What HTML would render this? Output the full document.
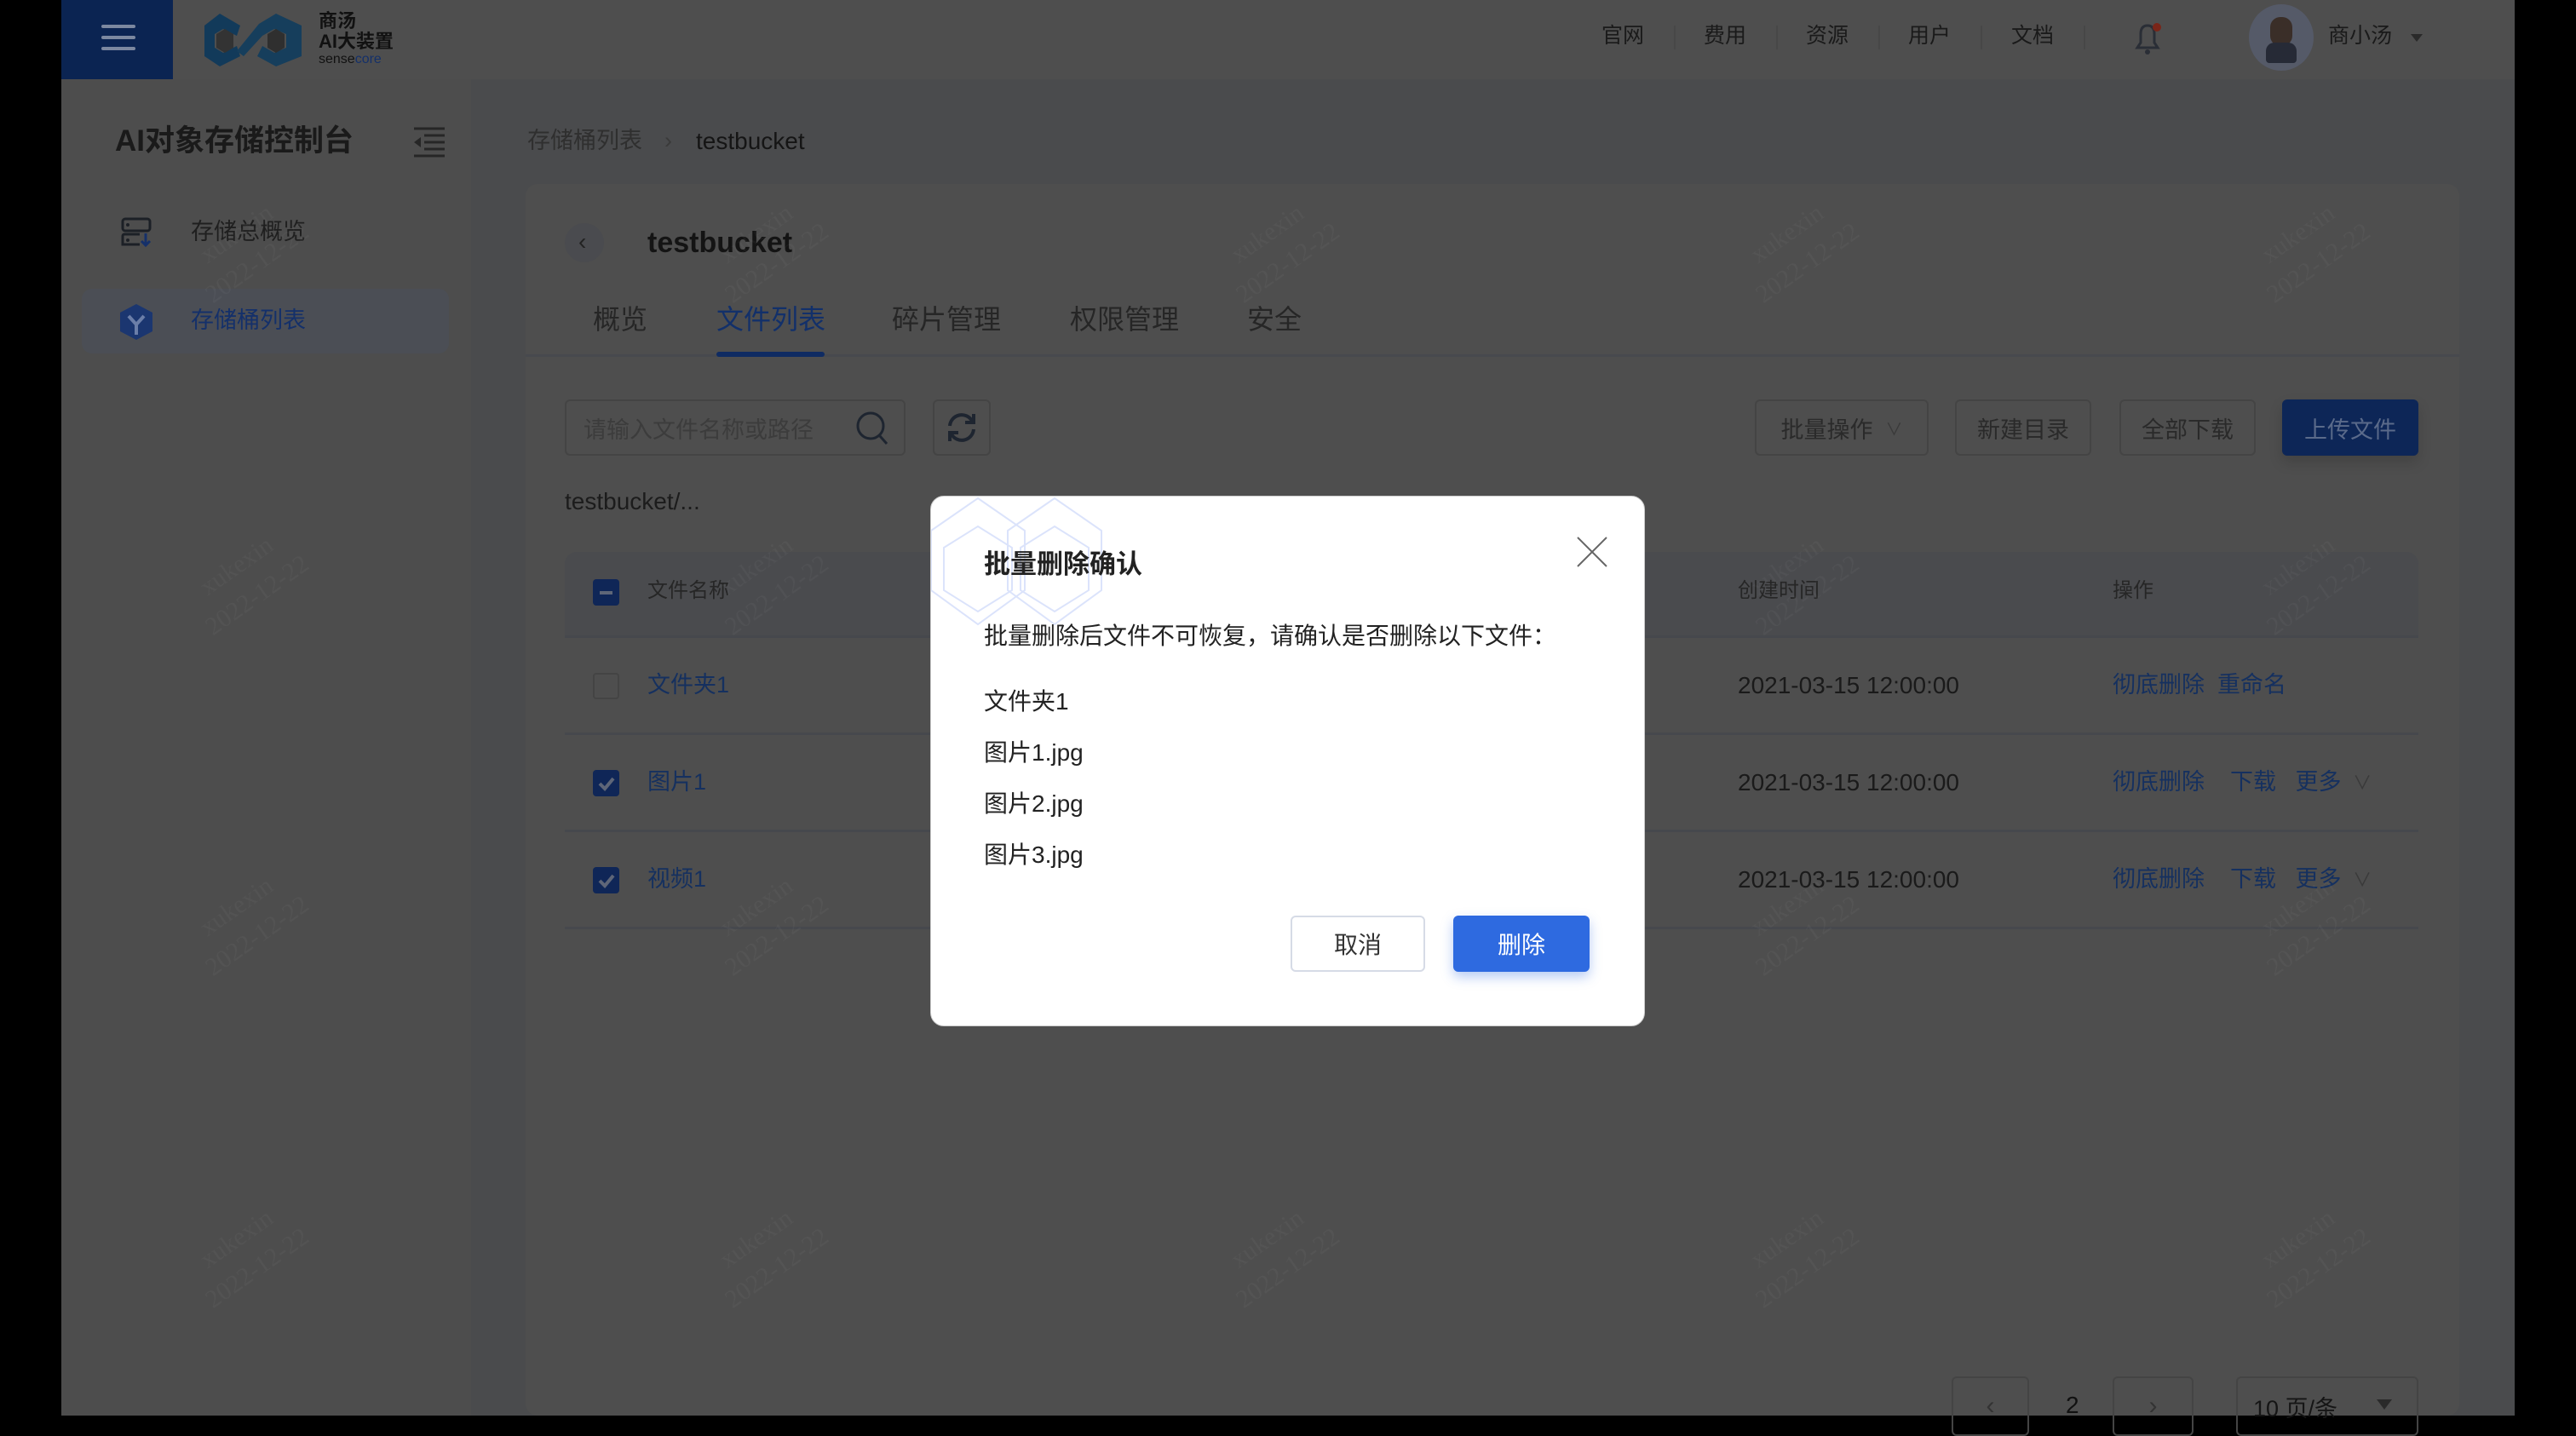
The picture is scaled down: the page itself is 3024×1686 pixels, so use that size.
<!DOCTYPE html>
<html><head><meta charset="utf-8"><style>
*{margin:0;padding:0;box-sizing:border-box}
body{width:3024px;height:1662px;overflow:hidden;background:#000;font-family:"Liberation Sans","Noto Sans CJK SC",sans-serif;position:relative;color:#1c1c1c}
.a{position:absolute}
.page{left:72px;top:0;width:2880px;height:1662px;background:#4a4b4d}
.hdr{left:72px;top:0;width:2880px;height:93px;background:#4e4e4e}
.side{left:72px;top:93px;width:481px;height:1569px;background:#4d4d4d}
.card{left:617px;top:216px;width:2270px;height:1446px;background:#4e4e4e;border-radius:14px}
.t{white-space:nowrap;line-height:1}
.nav{font-size:25px;color:#1a1a1a;top:30px}
.sep{width:2px;height:28px;background:#474747;top:30px}
.btn{border:2px solid #444;border-radius:6px;height:66px;font-size:27px;color:#2a2a2a;display:flex;align-items:center;justify-content:center}
.hl{height:3px;background:#46484d;left:663px;width:2176px}
.cb{width:31px;height:31px;border-radius:4px;background:#0f2657;left:696px}
.lnk{color:#15305f;font-size:27px}
.wm{color:rgba(255,255,255,0.035);font-family:"Liberation Serif",serif;font-size:30px;transform:rotate(-35deg);line-height:1.4;text-align:center;white-space:nowrap}
</style></head><body>
<div class="a page"></div>
<div class="a hdr"></div>
<div class="a" style="left:72px;top:0;width:131px;height:93px;background:#0b2452"></div>
<div class="a" style="left:119px;top:29px;width:40px;height:4px;background:#7c88a0;border-radius:2px"></div>
<div class="a" style="left:119px;top:42px;width:40px;height:4px;background:#7c88a0;border-radius:2px"></div>
<div class="a" style="left:119px;top:55px;width:40px;height:4px;background:#7c88a0;border-radius:2px"></div>
<svg class="a" style="left:238px;top:12px" width="120" height="70" viewBox="0 0 120 70"><path d="M20 4 L44 18 L40 30 L24 22 L14 28 L14 44 L24 50 L40 42 L44 54 L20 66 L2 54 L2 18 Z" fill="#123a5a"/><path d="M86 4 L116 18 L116 54 L86 66 L64 54 L70 42 L84 50 L98 44 L98 28 L84 22 L70 30 L48 54 L40 48 L66 16 Z" fill="#163e5c"/><path d="M16 28 L26 22 L36 28 L36 44 L26 50 L16 44Z" fill="#333"/><path d="M76 28 L86 22 L96 28 L96 44 L86 50 L76 44Z" fill="#2f2f2f"/></svg>
<div class="a t" style="left:374px;top:14px;font-size:22px;font-weight:bold;color:#111">商汤</div>
<div class="a t" style="left:374px;top:38px;font-size:22px;font-weight:bold;color:#111">AI大装置</div>
<div class="a t" style="left:374px;top:62px;font-size:16px;color:#111">sense<span style="color:#14306a">core</span></div>
<div class="a t nav" style="left:1880px">官网</div><div class="a sep" style="left:1965px"></div>
<div class="a t nav" style="left:2000px">费用</div><div class="a sep" style="left:2085px"></div>
<div class="a t nav" style="left:2120px">资源</div><div class="a sep" style="left:2205px"></div>
<div class="a t nav" style="left:2240px">用户</div><div class="a sep" style="left:2325px"></div>
<div class="a t nav" style="left:2361px">文档</div><div class="a sep" style="left:2446px"></div>
<svg class="a" style="left:2503px;top:22px" width="38" height="44" viewBox="0 0 38 44"><path d="M6 34 L10 28 L10 18 Q10 8 18 8 Q26 8 26 18 L26 28 L30 34 Z" fill="none" stroke="#2a2e36" stroke-width="3"/><circle cx="18" cy="39" r="3" fill="#2a2e36"/><circle cx="29" cy="10" r="5" fill="#7a2518"/></svg>
<div class="a" style="left:2640px;top:5px;width:76px;height:78px;border-radius:50%;background:#555a68"></div>
<div class="a" style="left:2665px;top:20px;width:26px;height:34px;border-radius:12px;background:#3a2e28"></div>
<div class="a" style="left:2660px;top:50px;width:36px;height:24px;border-radius:10px 10px 4px 4px;background:#262a36"></div>
<div class="a t nav" style="left:2733px">商小汤</div>
<div class="a" style="left:2830px;top:40px;border-left:7px solid transparent;border-right:7px solid transparent;border-top:9px solid #2a2a2a"></div>

<div class="a side"></div>
<div class="a t" style="left:135px;top:148px;font-size:35px;font-weight:bold;color:#1a1a1a">AI对象存储控制台</div>
<svg class="a" style="left:484px;top:149px" width="40" height="36" viewBox="0 0 40 36"><path d="M2 2H38M14 18H38M2 34H38M14 10H38M14 26H38" stroke="#262626" stroke-width="3"/><path d="M10 12 L2 18 L10 24Z" fill="#262626"/></svg>
<svg class="a" style="left:142px;top:255px" width="36" height="36" viewBox="0 0 36 36"><rect x="2" y="2" width="32" height="14" rx="3" fill="none" stroke="#1c2026" stroke-width="3"/><path d="M22 20H4a2 2 0 0 0-2 2v10h20" fill="none" stroke="#1c2026" stroke-width="3"/><circle cx="8" cy="9" r="2" fill="#1c2026"/><circle cx="8" cy="27" r="2" fill="#1c2026"/><path d="M29 19V33M24 28L29 33L34 28" fill="none" stroke="#15306a" stroke-width="3"/></svg>
<div class="a t" style="left:224px;top:259px;font-size:27px;color:#1f1f1f">存储总概览</div>
<div class="a" style="left:96px;top:339px;width:431px;height:76px;border-radius:12px;background:#4b4e55"></div>
<svg class="a" style="left:137px;top:355px" width="46" height="46" viewBox="0 0 46 46"><path d="M23 2 L42 12 L42 34 L23 44 L4 34 L4 12Z" fill="#1b3670"/><path d="M14 16 L23 26 L32 16 M23 26 V38" stroke="#6b7ea8" stroke-width="4" fill="none"/></svg>
<div class="a t" style="left:224px;top:363px;font-size:27px;color:#14306a">存储桶列表</div>

<div class="a t" style="left:619px;top:152px;font-size:27px;color:#2f2f2f">存储桶列表</div>
<div class="a t" style="left:780px;top:152px;font-size:27px;color:#3a3a3a">›</div>
<div class="a t" style="left:817px;top:152px;font-size:28px;color:#151515">testbucket</div>

<div class="a card"></div>
<div class="a" style="left:663px;top:262px;width:46px;height:46px;border-radius:50%;background:#4a4b4f"></div>
<div class="a t" style="left:679px;top:270px;font-size:28px;color:#222">‹</div>
<div class="a t" style="left:760px;top:268px;font-size:34px;font-weight:bold;color:#141414">testbucket</div>
<div class="a t" style="left:696px;top:359px;font-size:32px;color:#262626">概览</div>
<div class="a t" style="left:841px;top:359px;font-size:32px;color:#12306a">文件列表</div>
<div class="a t" style="left:1047px;top:359px;font-size:32px;color:#262626">碎片管理</div>
<div class="a t" style="left:1256px;top:359px;font-size:32px;color:#262626">权限管理</div>
<div class="a t" style="left:1464px;top:359px;font-size:32px;color:#262626">安全</div>
<div class="a" style="left:617px;top:416px;width:2270px;height:3px;background:#47494e"></div>
<div class="a" style="left:841px;top:413px;width:127px;height:6px;border-radius:3px;background:#0f2b62"></div>

<div class="a btn" style="left:663px;top:469px;width:400px;justify-content:flex-start;padding-left:20px;color:#3c3c3c">请输入文件名称或路径</div>
<svg class="a" style="left:1004px;top:482px" width="40" height="42" viewBox="0 0 40 42"><circle cx="18" cy="18" r="15" fill="none" stroke="#1e2530" stroke-width="3"/><path d="M29 30 L37 39" stroke="#1e2530" stroke-width="3"/></svg>
<div class="a btn" style="left:1095px;top:469px;width:68px"></div>
<svg class="a" style="left:1110px;top:482px" width="38" height="40" viewBox="0 0 38 40"><path d="M5 18 A14 14 0 0 1 31 12 M33 22 A14 14 0 0 1 7 28" fill="none" stroke="#1e2530" stroke-width="4"/><path d="M33 4 V14 H23 M5 36 V26 H15" fill="none" stroke="#1e2530" stroke-width="4"/></svg>
<div class="a btn" style="left:2060px;top:469px;width:204px">批量操作&nbsp;&nbsp;<span style="font-size:20px;color:#3a3a3a">∨</span></div>
<div class="a btn" style="left:2295px;top:469px;width:160px">新建目录</div>
<div class="a btn" style="left:2488px;top:469px;width:160px">全部下载</div>
<div class="a btn" style="left:2679px;top:469px;width:160px;background:#0d2657;border-color:#0d2657;color:#5a6a8a;box-shadow:0 8px 16px rgba(0,0,0,.15)">上传文件</div>
<div class="a t" style="left:663px;top:575px;font-size:28px;color:#1c1c1c">testbucket/...</div>

<div class="a" style="left:663px;top:648px;width:2176px;height:100px;background:#4a4b4e;border-radius:14px 14px 0 0"></div>
<div class="a hl" style="top:746px"></div>
<div class="a hl" style="top:860px"></div>
<div class="a hl" style="top:974px"></div>
<div class="a hl" style="top:1088px"></div>
<div class="a cb" style="top:680px"></div><div class="a" style="left:704px;top:694px;width:15px;height:4px;background:#5e6678"></div>
<div class="a t" style="left:760px;top:682px;font-size:24px;color:#262626">文件名称</div>
<div class="a t" style="left:2040px;top:682px;font-size:24px;color:#262626">创建时间</div>
<div class="a t" style="left:2480px;top:682px;font-size:24px;color:#262626">操作</div>
<div class="a" style="left:696px;top:790px;width:31px;height:31px;border:2px solid #444;border-radius:4px"></div>
<div class="a t lnk" style="left:760px;top:791px">文件夹1</div>
<div class="a cb" style="top:904px"></div><svg class="a" style="left:700px;top:910px" width="24" height="20"><path d="M4 10 L10 16 L20 4" stroke="#5e6678" stroke-width="4" fill="none"/></svg>
<div class="a t lnk" style="left:760px;top:905px">图片1</div>
<div class="a cb" style="top:1018px"></div><svg class="a" style="left:700px;top:1024px" width="24" height="20"><path d="M4 10 L10 16 L20 4" stroke="#5e6678" stroke-width="4" fill="none"/></svg>
<div class="a t lnk" style="left:760px;top:1019px">视频1</div>
<div class="a t" style="left:2040px;top:791px;font-size:28px;color:#1a1a1a">2021-03-15 12:00:00</div>
<div class="a t" style="left:2040px;top:905px;font-size:28px;color:#1a1a1a">2021-03-15 12:00:00</div>
<div class="a t" style="left:2040px;top:1019px;font-size:28px;color:#1a1a1a">2021-03-15 12:00:00</div>
<div class="a t lnk" style="left:2480px;top:791px">彻底删除&nbsp;&nbsp;重命名</div>
<div class="a t lnk" style="left:2480px;top:905px">彻底删除&nbsp;&nbsp;&nbsp;&nbsp;下载&nbsp;&nbsp;&nbsp;更多 <span style="color:#3a3a3a;font-size:22px">&nbsp;∨</span></div>
<div class="a t lnk" style="left:2480px;top:1019px">彻底删除&nbsp;&nbsp;&nbsp;&nbsp;下载&nbsp;&nbsp;&nbsp;更多 <span style="color:#3a3a3a;font-size:22px">&nbsp;∨</span></div>

<div class="a btn" style="left:2291px;top:1616px;width:91px;height:70px;font-size:30px;color:#333">‹</div>
<div class="a t" style="left:2425px;top:1636px;font-size:28px;color:#111">2</div>
<div class="a btn" style="left:2480px;top:1616px;width:95px;height:70px;font-size:30px;color:#333">›</div>
<div class="a btn" style="left:2625px;top:1616px;width:214px;height:70px;justify-content:flex-start;padding-left:18px;color:#151515">10 页/条</div>
<div class="a" style="left:2790px;top:1643px;border-left:9px solid transparent;border-right:9px solid transparent;border-top:12px solid #2a2a2a"></div>

<div class="a wm" style="left:220px;top:250px">xukexin<br>2022-12-22</div>
<div class="a wm" style="left:830px;top:250px">xukexin<br>2022-12-22</div>
<div class="a wm" style="left:1430px;top:250px">xukexin<br>2022-12-22</div>
<div class="a wm" style="left:2040px;top:250px">xukexin<br>2022-12-22</div>
<div class="a wm" style="left:2640px;top:250px">xukexin<br>2022-12-22</div>
<div class="a wm" style="left:220px;top:640px">xukexin<br>2022-12-22</div>
<div class="a wm" style="left:830px;top:640px">xukexin<br>2022-12-22</div>
<div class="a wm" style="left:2040px;top:640px">xukexin<br>2022-12-22</div>
<div class="a wm" style="left:2640px;top:640px">xukexin<br>2022-12-22</div>
<div class="a wm" style="left:220px;top:1040px">xukexin<br>2022-12-22</div>
<div class="a wm" style="left:830px;top:1040px">xukexin<br>2022-12-22</div>
<div class="a wm" style="left:2040px;top:1040px">xukexin<br>2022-12-22</div>
<div class="a wm" style="left:2640px;top:1040px">xukexin<br>2022-12-22</div>
<div class="a wm" style="left:220px;top:1430px">xukexin<br>2022-12-22</div>
<div class="a wm" style="left:830px;top:1430px">xukexin<br>2022-12-22</div>
<div class="a wm" style="left:1430px;top:1430px">xukexin<br>2022-12-22</div>
<div class="a wm" style="left:2040px;top:1430px">xukexin<br>2022-12-22</div>
<div class="a wm" style="left:2640px;top:1430px">xukexin<br>2022-12-22</div>

<div class="a" style="left:1092px;top:582px;width:839px;height:623px;background:#fff;border-radius:16px;overflow:hidden;border:1px solid #ccc">
<svg class="a" style="left:0;top:0" width="240" height="170" viewBox="0 0 240 170"><g fill="none" stroke="#dbe3fb" stroke-width="2"><path d="M0 40 L55 2 L110 40 L110 110 L55 150 L0 110Z"/><path d="M90 40 L145 2 L200 40 L200 110 L145 150 L90 110Z"/><path d="M15 60 L55 35 L95 60 L95 110 L55 135 L15 110Z"/><path d="M105 60 L145 35 L185 60 L185 110 L145 135 L105 110Z"/></g></svg>
<div class="a t" style="left:62px;top:64px;font-size:31px;font-weight:bold;color:#222">批量删除确认</div>
<svg class="a" style="left:757px;top:46px" width="38" height="38" viewBox="0 0 38 38"><path d="M2 2L36 36M36 2L2 36" stroke="#666" stroke-width="2"/></svg>
<div class="a t" style="left:62px;top:150px;font-size:28px;color:#222">批量删除后文件不可恢复，请确认是否删除以下文件：</div>
<div class="a t" style="left:62px;top:227px;font-size:28px;color:#222">文件夹1</div>
<div class="a t" style="left:62px;top:287px;font-size:28px;color:#222">图片1.jpg</div>
<div class="a t" style="left:62px;top:347px;font-size:28px;color:#222">图片2.jpg</div>
<div class="a t" style="left:62px;top:407px;font-size:28px;color:#222">图片3.jpg</div>
<div class="a" style="left:422px;top:492px;width:158px;height:66px;border:2px solid #d6dbe6;border-radius:6px;font-size:28px;color:#333;display:flex;align-items:center;justify-content:center">取消</div>
<div class="a" style="left:613px;top:492px;width:160px;height:66px;background:#2e6ae0;border-radius:6px;font-size:28px;color:#fff;display:flex;align-items:center;justify-content:center;box-shadow:0 6px 14px rgba(46,106,224,.35)">删除</div>
</div>
</body></html>
